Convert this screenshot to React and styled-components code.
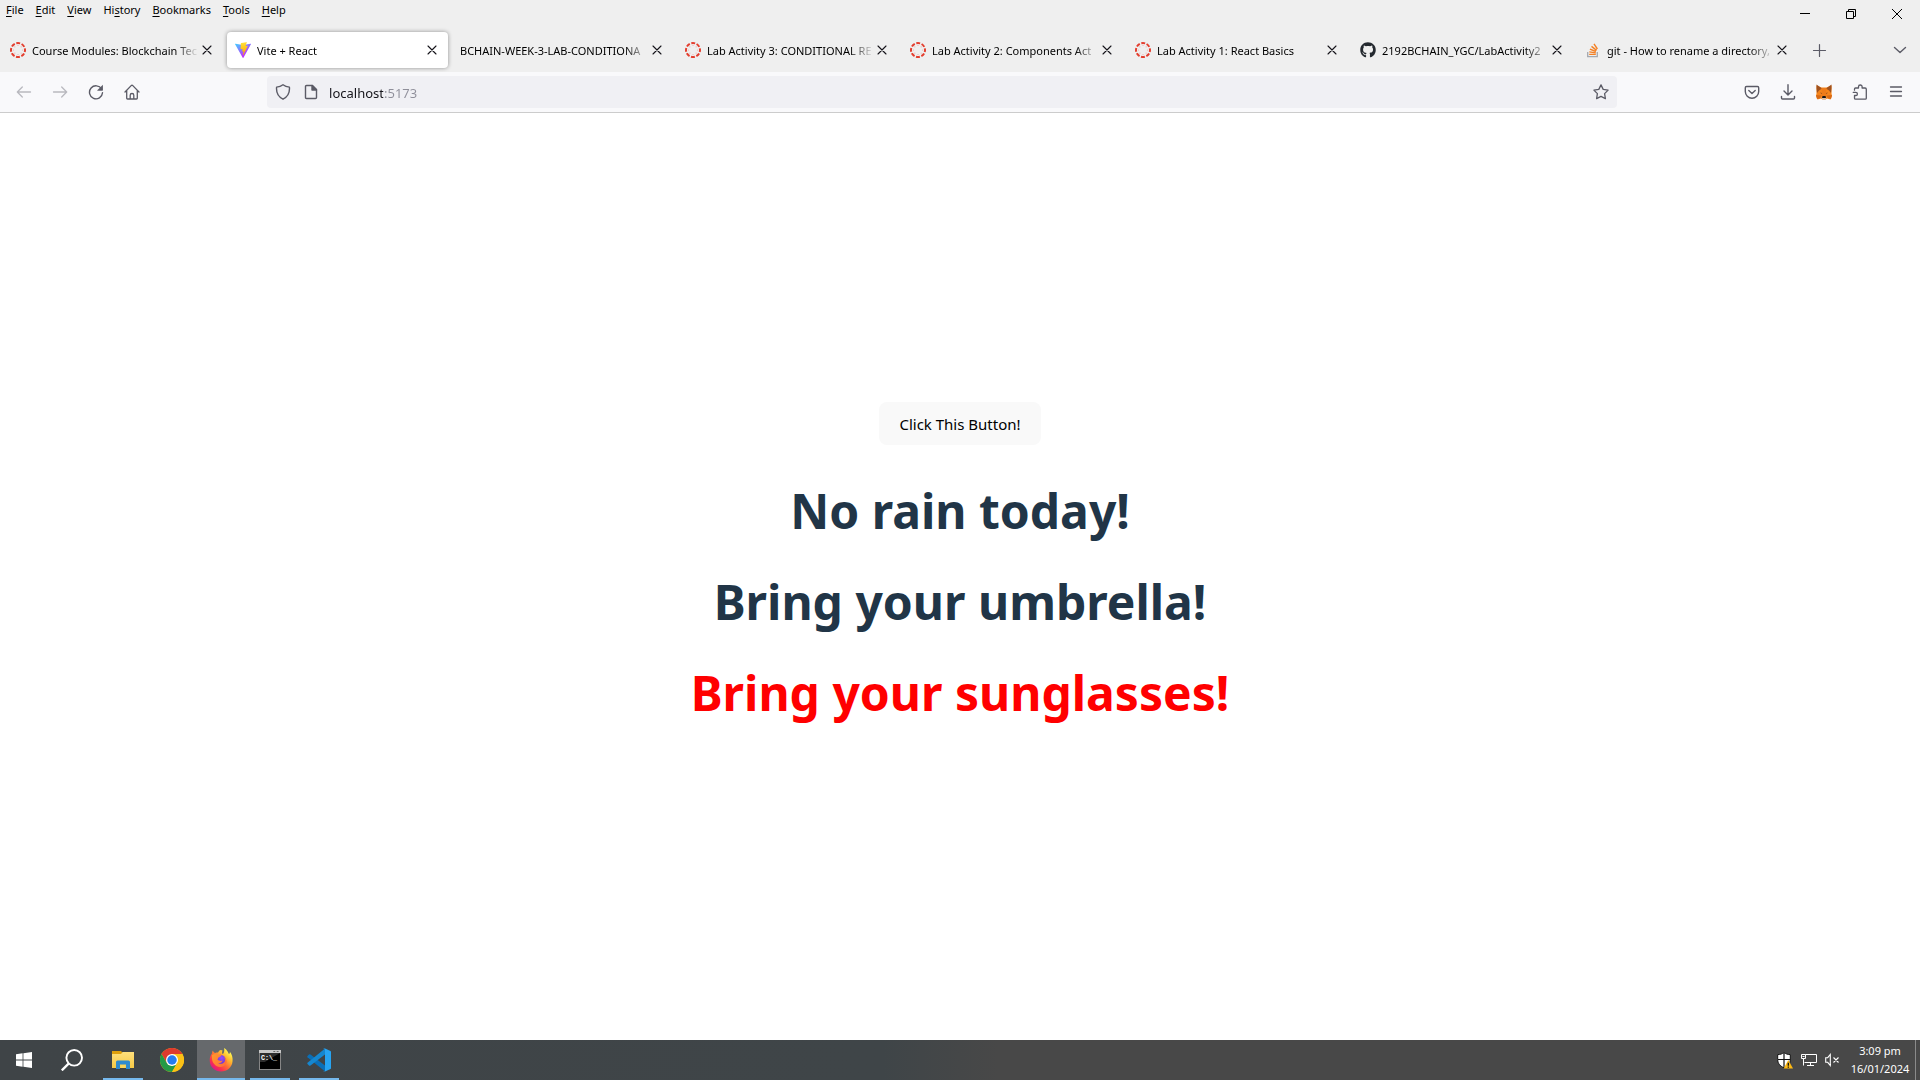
import React, { useState } from "react";
import styled, { createGlobalStyle, css } from "styled-components";
import { FaGithub } from "react-icons/fa";

const uiFont = `"Noto Sans", "Open Sans", sans-serif`;

const GlobalStyle = createGlobalStyle`
  *, *::before, *::after { box-sizing: border-box; }
  body { margin: 0; font-family: ${uiFont}; font-size: 11px; color: #000; background: #fff; }
  button, input { font: inherit; color: inherit; border: 0; background: none; padding: 0; margin: 0; }
  svg { display: block; flex: none; }
`;

const Desktop = styled.div`
  display: flex;
  flex-direction: column;
  min-height: 100vh;
`;

/* ---------- browser chrome ---------- */

const TitleArea = styled.header`
  background: #efefef;
`;

const TitleRow = styled.div`
  display: flex;
  align-items: flex-start;
  justify-content: space-between;
  height: 28px;
`;

const MenuBar = styled.nav`
  display: flex;
`;

const MenuButton = styled.button`
  height: 20px;
  padding: 0 6px;
  line-height: 20px;
  u { text-underline-offset: 2px; }
`;

const WindowControls = styled.div`
  display: flex;
`;

const WindowButton = styled.button`
  display: grid;
  place-items: center;
  width: 46px;
  height: 28px;
`;

const TabStrip = styled.div`
  display: flex;
  align-items: center;
  height: 44px;
`;

const TabSlot = styled.div`
  flex: 0 1 225px;
  min-width: 0;
  padding: 0 2px;
`;

const TabBox = styled.div`
  display: flex;
  align-items: center;
  gap: 6px;
  height: 36px;
  padding: 0 4px 0 8px;
  border-radius: 4px;
  ${(p) =>
    p.$active &&
    css`
      background: #fff;
      box-shadow: 0 0 4px rgba(0, 0, 0, 0.4);
    `}
`;

const TabTitle = styled.button`
  display: flex;
  align-items: center;
  gap: 6px;
  flex: 1;
  min-width: 0;
  height: 36px;
  text-align: left;
`;

const TabLabel = styled.span`
  flex: 1;
  min-width: 0;
  padding-top: 2px;
  overflow: hidden;
  white-space: nowrap;
  line-height: 20px;
  mask-image: linear-gradient(to left, transparent, #000 24px);
`;

const TabClose = styled.button`
  display: grid;
  place-items: center;
  width: 16px;
  height: 24px;
  margin: 0 4px 0 -6px;
`;

const StripButton = styled.button`
  display: grid;
  place-items: center;
  width: 36px;
  height: 36px;
  color: #5b5b66;
  margin-left: ${(p) => (p.$end ? "auto" : "1px")};
  margin-right: ${(p) => (p.$end ? "2px" : "0")};
`;

const NavBar = styled.div`
  display: flex;
  align-items: center;
  height: 41px;
  padding: 0 6px;
  background: #f9f9fb;
  border-bottom: 1px solid #ccc;
`;

const Spring = styled.div`
  flex: 2;
`;

const ToolButton = styled.button`
  display: grid;
  place-items: center;
  width: 36px;
  height: 32px;
  color: #5b5b66;
  &:disabled { color: #b9b9bf; }
`;

const UrlBar = styled.form`
  flex: 23;
  display: flex;
  align-items: center;
  height: 32px;
  padding: 0 2px;
  border-radius: 4px;
  background: #f0f0f4;
`;

const UrlButton = styled.button`
  display: grid;
  place-items: center;
  width: 28px;
  height: 28px;
  color: #5b5b66;
`;

const UrlInput = styled.input`
  flex: 1;
  min-width: 0;
  height: 28px;
  padding: 2px 0 0 4px;
  font-size: 13px;
  color: transparent;
  caret-color: #15141a;
  outline: none;
  background-image: linear-gradient(to right, #15141a 58px, #8f8f9a 58px);
  background-clip: text;
  -webkit-background-clip: text;
`;

/* ---------- web page ---------- */

const Page = styled.main`
  flex: 1;
  display: flex;
  flex-direction: column;
  align-items: center;
  justify-content: center;
  gap: 34px;
  padding-bottom: 31px;
  background: #fff;
`;

const PageButton = styled.button`
  margin-bottom: 3px;
  padding: 11px 20px 9px;
  border-radius: 8px;
  background: #f9f9f9;
  font-size: 15px;
  line-height: 23px;
`;

const Headline = styled.h1`
  margin: 0;
  font-size: 48px;
  font-weight: 700;
  line-height: 57px;
  color: ${(p) => (p.$alert ? "#ff0000" : "#213547")};
`;

/* ---------- taskbar ---------- */

const Taskbar = styled.footer`
  display: flex;
  justify-content: space-between;
  height: 40px;
  color: #fff;
  background: linear-gradient(to right, #3f4447 0%, #3f4548 46%, #484848 52%, #484848 100%);
`;

const TaskGroup = styled.div`
  display: flex;
  gap: ${(p) => p.$gap || 0}px;
  margin-left: ${(p) => (p.$gap ? 3 : 0)}px;
`;

const TaskButton = styled.button`
  display: grid;
  place-items: center;
  width: 48px;
  height: 40px;
  background: ${(p) => (p.$active ? "#66696c" : "none")};
  ${(p) =>
    p.$open &&
    css`
      background-image: linear-gradient(#76b9ed, #76b9ed);
      background-repeat: no-repeat;
      background-position: center bottom;
      background-size: ${p.$active ? 48 : 40}px 2px;
    `}
`;

const Tray = styled.div`
  display: flex;
  align-items: center;
`;

const TrayButton = styled.button`
  display: grid;
  place-items: center;
  width: 24px;
  height: 40px;
`;

const Clock = styled.button`
  width: 68px;
  margin-left: 1px;
  margin-right: 1px;
  line-height: 18px;
  text-align: center;
  white-space: nowrap;
  time { display: block; }
`;

const ShowDesktop = styled.button`
  width: 5px;
  height: 40px;
  border-left: 1px solid #8a8a8a;
`;

/* ---------- icons ---------- */

const Line = ({ size = 16, children, w = 1.3, ...rest }) => (
  <svg width={size} height={size} viewBox="0 0 16 16" fill="none" stroke="currentColor" strokeWidth={w} strokeLinecap="round" strokeLinejoin="round" aria-hidden="true" {...rest}>
    {children}
  </svg>
);

const CanvasIcon = () => (
  <svg width="16" height="16" viewBox="0 0 16 16" fill="none" aria-hidden="true">
    <circle cx="8" cy="8" r="7" stroke="#e33e2e" strokeWidth="2" strokeDasharray="3.9 1.598" strokeDashoffset="1.95" />
    {[0, 45, 90, 135, 180, 225, 270, 315].map((a) => (
      <circle key={a} cx="8" cy="3.6" r="0.5" fill="#e9a39b" transform={`rotate(${a} 8 8)`} />
    ))}
  </svg>
);

const ViteIcon = () => (
  <svg width="16" height="16" viewBox="0 0 256 257" aria-hidden="true">
    <defs>
      <linearGradient id="va" x1="0" x2="0.6" y1="0" y2="0.8"><stop offset="0" stopColor="#41d1ff" /><stop offset="1" stopColor="#bd34fe" /></linearGradient>
      <linearGradient id="vb" x1="0.43" x2="0.5" y1="0.02" y2="0.9"><stop offset="0" stopColor="#ffea83" /><stop offset="0.08" stopColor="#ffdd35" /><stop offset="1" stopColor="#ffa800" /></linearGradient>
    </defs>
    <path fill="url(#va)" d="M255.153 37.938L134.897 252.976c-2.483 4.44-8.862 4.466-11.382.048L.875 37.958c-2.746-4.814 1.371-10.646 6.827-9.67l120.385 21.517a6.537 6.537 0 0 0 2.322-.004l117.867-21.483c5.438-.991 9.574 4.796 6.877 9.62Z" />
    <path fill="url(#vb)" d="M185.432.063L96.44 17.501a3.268 3.268 0 0 0-2.634 3.014l-5.474 92.456a3.268 3.268 0 0 0 3.997 3.378l24.777-5.718c2.318-.535 4.413 1.507 3.936 3.838l-7.361 36.047c-.495 2.426 1.782 4.5 4.151 3.78l15.304-4.649c2.372-.72 4.652 1.36 4.15 3.788l-11.698 56.621c-.732 3.542 3.979 5.473 5.943 2.437l1.313-2.028l72.516-144.72c1.215-2.423-.88-5.186-3.54-4.672l-25.505 4.922c-2.396.462-4.435-1.77-3.759-4.114l16.646-57.705c.677-2.35-1.37-4.583-3.769-4.113Z" />
  </svg>
);

const StackIcon = () => (
  <svg width="16" height="16" viewBox="0 0 16 16" fill="none" aria-hidden="true">
    <path d="M2.7 10v4.6h9.6V10" stroke="#a5a8ae" strokeWidth="1.3" />
    <path d="M4.2 12.4h6.6M4.3 9.9l6.5 1M4.9 7.2l6 2.3M6.5 4.4l5.1 4M9 1.8l3.4 5.2" stroke="#f48024" strokeWidth="1.4" />
  </svg>
);

const CloseIcon = () => (
  <svg width="10" height="10" viewBox="0 0 10 10" stroke="#15141a" strokeWidth="1.1" strokeLinecap="round" aria-hidden="true">
    <path d="M1 1l8 8M9 1L1 9" />
  </svg>
);

const MetaMaskIcon = () => (
  <svg width="16" height="16" viewBox="0 0 32 32" aria-hidden="true">
    <path fill="#f6851b" d="M1 3l10 4h10l10-4v16l1 5-3 7-7-2-3 2h-6l-3-2-7 2-3-7 1-5z" />
    <path fill="#a0521f" d="M1 1l11 8-6 4-4 5-1-9zM31 1l-11 8 6 4 4 5 1-9z" />
    <path fill="#ee7c1a" d="M11 8h10l-1 10 3 6-7 1-7-1 3-6z" />
    <path fill="#d76a17" d="M0 22l10 1-1 5-7 2zM32 22l-10 1 1 5 7 2z" />
    <path fill="#8a4a25" d="M8 17l4 1-1 2zM24 17l-4 1 1 2z" />
    <path fill="#d7c1b3" d="M11 27h10l-2 4h-6z" />
    <path fill="#161616" d="M13 24h6l1 4h-8z" />
  </svg>
);

const WindowsIcon = () => (
  <svg width="16" height="16" viewBox="0 0 16 16" fill="#fff" aria-hidden="true">
    <path d="M0 2.2l6.6-.9v6.2H0zM7.4 1.2L16 0v7.5H7.4zM0 8.4h6.6v6.3L0 13.8zM7.4 8.4H16V16l-8.6-1.2z" />
  </svg>
);

const SearchIcon = () => (
  <svg width="22" height="22" viewBox="0 0 22 22" fill="none" stroke="#fff" aria-hidden="true">
    <circle cx="13.2" cy="8.8" r="7.8" strokeWidth="1.9" />
    <path d="M7.6 14.6L.8 21.4" strokeWidth="2.3" />
  </svg>
);

const ExplorerIcon = () => (
  <svg width="22" height="20" viewBox="0 0 22 20" aria-hidden="true">
    <defs><linearGradient id="fold" x1="0" x2="0" y1="0" y2="1"><stop offset="0" stopColor="#ffe07c" /><stop offset="1" stopColor="#f7c945" /></linearGradient></defs>
    <path fill="#dfa00c" d="M0 1h9l1.5 1.8L9 5H0z" />
    <path fill="url(#fold)" d="M0 4h9l1.6-2H22v16H0z" />
    <path fill="#2f8bcf" d="M4 12q0-1.5 1.500-1.500h11q1.500 0 1.500 1.500v7h-4v-4.500H8V19H4z" />
    <path fill="#fbd55c" d="M8.500 15h5v3h-5z" />
  </svg>
);

const ChromeIcon = () => (
  <svg width="24" height="24" viewBox="0 0 48 48" aria-hidden="true">
    <circle cx="24" cy="24" r="24" fill="#fbc116" />
    <path fill="#de3a2e" d="M3.200 12A24 24 0 0 1 44.800 12H24L13.600 30z" />
    <path fill="#249a46" d="M3.200 12A24 24 0 0 0 24 48L34.400 30 24 36 13.600 30z" />
    <path fill="#fbc116" d="M44.800 12H24l10.400 18L24 48A24 24 0 0 0 44.800 12z" />
    <circle cx="24" cy="24" r="12" fill="#fff" />
    <circle cx="24" cy="24" r="9.500" fill="#267cf0" />
  </svg>
);

const FirefoxIcon = () => (
  <svg width="24" height="24" viewBox="0 0 48 48" aria-hidden="true">
    <defs>
      <linearGradient id="ffa" x1="0.850" x2="0.150" y1="0.100" y2="0.900"><stop offset="0.050" stopColor="#fff44f" /><stop offset="0.300" stopColor="#ffb52e" /><stop offset="0.550" stopColor="#ff6b36" /><stop offset="0.800" stopColor="#f9304f" /><stop offset="1" stopColor="#d8178c" /></linearGradient>
      <radialGradient id="ffb" cx="0.600" cy="0.300" r="0.700"><stop offset="0" stopColor="#9a4dfd" /><stop offset="1" stopColor="#5b35c9" /></radialGradient>
      <linearGradient id="ffc" x1="0" x2="1" y1="0" y2="0.600"><stop offset="0" stopColor="#ff9a2b" /><stop offset="1" stopColor="#ff7139" /></linearGradient>
    </defs>
    <path fill="url(#ffa)" d="M30 0c7 4 8 9 10 12 2-1 2-3 1.500-5C46 13 48 19 47 27c-1 12-11 20-23 20S2 38 1.500 26C1 20 3 14 6 11c0-1 0-4 2-6 0 2 2 4 4 5 2-1 4-1 6-1 3-6 6-6 9-4-2 5 0 8 1 7 3-4 3-8 2-12z" />
    <circle cx="23" cy="24" r="10.500" fill="url(#ffb)" />
    <path fill="url(#ffc)" d="M6 14c5-3 9-2 12 0 2 0 4-2 7 0 0 2-4 4-6 5-2 2-1 4-2 5 4 1 6 3 10 1-1 5-6 6-9 5 3 3 10 2 13-2 2-4 1-7-1-10 5 3 7 9 4 14-4 6-13 8-19 4S5 27 6 14z" />
  </svg>
);

const TerminalIcon = () => (
  <svg width="22" height="20" viewBox="0 0 23 20" preserveAspectRatio="none" aria-hidden="true">
    <rect x="0.500" y="0.500" width="22" height="19" fill="#000" stroke="#8b8b8b" />
    <rect x="0" y="0" width="23" height="3" fill="#c8c8c8" />
    <path d="M15 1.500h2M18.500 1.500h2" stroke="#666" />
    <path fill="#2d2d2d" d="M1 3h21L6 12H1z" />
    <text x="2" y="10" fontSize="7" fontWeight="700" fontFamily="Liberation Mono, monospace" fill="#fff">C:\_</text>
  </svg>
);

const CodeIcon = () => (
  <svg width="24" height="24" viewBox="0 0 48 48" aria-hidden="true">
    <path fill="#0a6fb8" d="M1 16l3-3q1-1 3 0l29 22v12L1 18.500q-1-1 0-2.500z" />
    <path fill="#1587d0" d="M1 32l3 3q1 1 3 0L36 13V1L1 29.500q-1 1 0 2.500z" />
    <path fill="#27a4f2" d="M35 47.500q-2 .5-3-1 3 2 4-1V3q-1-3-4-1 1-2 3-1.500L47 6q1 .5 1 2v32q0 1.500-1 2z" />
  </svg>
);

const DefenderIcon = () => (
  <svg width="16" height="17" viewBox="0 0 16 17" aria-hidden="true">
    <path d="M7 .6c2 1.400 4 2 6.300 2v5c0 4-2.500 6.500-6.300 8.300C3.200 14 .7 11.600 .7 7.600v-5C3 2.600 5 2 7 .6z" fill="#fff" stroke="#111" />
    <path d="M7 1v15M1 7.500h12.500" stroke="#111" strokeWidth="1.200" />
    <path d="M11.300 8l4.700 8.500H6.600z" fill="#fdb913" />
    <path d="M11.300 10.800v3M11.300 14.600v1.200" stroke="#111" strokeWidth="1.300" />
  </svg>
);

const NetworkIcon = () => (
  <svg width="16" height="14" viewBox="0 0 16 14" fill="none" stroke="#fff" aria-hidden="true">
    <path d="M4.500 1.500h11v8h-12M.5 1.500h4v4h-4zM2.500 5.500v7M9.500 9.500v3M6 12.500h7M1.500 3.500h2" />
  </svg>
);

const MutedIcon = () => (
  <svg width="16" height="14" viewBox="0 0 16 14" fill="none" stroke="#fff" aria-hidden="true">
    <path d="M.7 4.700h2L5.300 1.500v11L2.700 9.300h-2zM8.500 4.500l5 5M13.500 4.500l-5 5" strokeWidth="1.100" />
  </svg>
);

/* ---------- data ---------- */

const menus = [["", "F", "ile"], ["", "E", "dit"], ["", "V", "iew"], ["Hi", "s", "tory"], ["", "B", "ookmarks"], ["", "T", "ools"], ["", "H", "elp"]];

const tabs = [
  { icon: <CanvasIcon />, title: "Course Modules: Blockchain Tec" },
  { icon: <ViteIcon />, title: "Vite + React" },
  { icon: null, title: "BCHAIN-WEEK-3-LAB-CONDITIONA" },
  { icon: <CanvasIcon />, title: "Lab Activity 3: CONDITIONAL RE" },
  { icon: <CanvasIcon />, title: "Lab Activity 2: Components Act" },
  { icon: <CanvasIcon />, title: "Lab Activity 1: React Basics" },
  { icon: <FaGithub size={16} color="#24292f" />, title: "2192BCHAIN_YGC/LabActivity2" },
  { icon: <StackIcon />, title: "git - How to rename a directory," },
];

const apps = [
  { name: "File Explorer", icon: <ExplorerIcon />, open: true },
  { name: "Google Chrome", icon: <ChromeIcon /> },
  { name: "Firefox", icon: <FirefoxIcon />, open: true, active: true },
  { name: "Command Prompt", icon: <TerminalIcon />, open: true },
  { name: "Visual Studio Code", icon: <CodeIcon />, open: true },
];

function BrowserHeader() {
  const [active, setActive] = useState(1);
  return (
    <TitleArea>
      <TitleRow>
        <MenuBar aria-label="Menu bar">
          {menus.map(([a, k, b]) => (
            <MenuButton key={k + b}>{a}<u>{k}</u>{b}</MenuButton>
          ))}
        </MenuBar>
        <WindowControls>
          <WindowButton aria-label="Minimize">
            <svg width="10" height="10" stroke="#000" aria-hidden="true"><path d="M0 4.500h10" /></svg>
          </WindowButton>
          <WindowButton aria-label="Restore">
            <svg width="10" height="10" fill="none" stroke="#000" aria-hidden="true"><path d="M.5 2.500h7v7h-7zM2.500 2.500v-2h7v7h-2" /></svg>
          </WindowButton>
          <WindowButton aria-label="Close">
            <svg width="10" height="10" stroke="#000" aria-hidden="true"><path d="M0 0l10 10M10 0L0 10" /></svg>
          </WindowButton>
        </WindowControls>
      </TitleRow>
      <TabStrip>
        {tabs.map((t, i) => (
          <TabSlot key={t.title}>
            <TabBox $active={i === active}>
              <TabTitle onClick={() => setActive(i)}>
                {t.icon}
                <TabLabel>{t.title}</TabLabel>
              </TabTitle>
              <TabClose aria-label={`Close ${t.title}`}><CloseIcon /></TabClose>
            </TabBox>
          </TabSlot>
        ))}
        <StripButton aria-label="New tab"><Line w={1.2}><path d="M2.500 8.500h12M8.500 2.500v12" /></Line></StripButton>
        <StripButton $end aria-label="List all tabs"><Line w={1.4}><path d="M2.500 5.500L8 10.500l5.500-5" /></Line></StripButton>
      </TabStrip>
    </TitleArea>
  );
}

function Navigation() {
  return (
    <NavBar>
      <ToolButton disabled aria-label="Back"><Line><path d="M14.500 8h-13M6.300 3L1.300 8l5 5" /></Line></ToolButton>
      <ToolButton disabled aria-label="Forward"><Line><path d="M1.500 8h13M9.700 3l5 5-5 5" /></Line></ToolButton>
      <ToolButton aria-label="Reload">
        <Line w={1.4}><path d="M13.600 5A6.500 6.500 0 1 0 14.500 8.800" /><path d="M14.500 1.800v4.500H10z" fill="currentColor" strokeWidth="0.800" /></Line>
      </ToolButton>
      <ToolButton aria-label="Home">
        <Line><path d="M1 8l6.200-6.400q.8-.7 1.600 0L15 8M2.700 6.800v7.400q0 .8.800.8h9q.8 0 .8-.8V6.800M6.200 15v-3.800q0-1.700 1.800-1.700t1.800 1.700V15" /></Line>
      </ToolButton>
      <Spring />
      <UrlBar onSubmit={(e) => e.preventDefault()}>
        <UrlButton type="button" aria-label="Tracking protection">
          <Line w={1.400}><path d="M8 .8c2 1.500 4 2.100 6.400 2.300.5 5-1.400 9.600-6.400 12.100C3 12.700 1.100 8.100 1.600 3.100 4 2.900 6 2.300 8 .8z" /></Line>
        </UrlButton>
        <UrlButton type="button" aria-label="Site information">
          <Line w={1.400}><path d="M3.500 1.500h6l4 4V13.500q0 1-1 1h-9q-1 0-1-1v-11q0-1 1-1z" /><path d="M9 1.500v4.500h4.500z" fill="currentColor" /></Line>
        </UrlButton>
        <UrlInput aria-label="Address" defaultValue="localhost:5173" spellCheck={false} />
        <UrlButton type="button" aria-label="Bookmark this page">
          <Line><path d="M8 .9l2.200 4.500 4.900.7-3.500 3.500.8 5L8 12.300l-4.400 2.300.8-5L.9 6.100l4.900-.7z" /></Line>
        </UrlButton>
      </UrlBar>
      <Spring />
      <ToolButton aria-label="Save to Pocket">
        <Line w={1.400}><path d="M2.500 2.500h11q1.200 0 1.200 1.200V7.500a6.700 6.700 0 0 1-13.400 0V3.700q0-1.200 1.200-1.200z" /><path d="M4.800 6.500L8 9.500l3.200-3" /></Line>
      </ToolButton>
      <ToolButton aria-label="Downloads">
        <Line w={1.400}><path d="M8 .8v10M4 7l4 4 4-4M1.500 12.500V14q0 1 1 1h11q1 0 1-1v-1.500" /></Line>
      </ToolButton>
      <ToolButton aria-label="MetaMask"><MetaMaskIcon /></ToolButton>
      <ToolButton aria-label="Extensions">
        <Line><path d="M2.500 6.200V5q0-1 1-1h3V2.800a1.700 1.700 0 0 1 3.600 0V4h3q1.200 0 1.200 1.200v9q0 1-1 1H3.500q-1 0-1-1V11.500h1.300a1.500 1.500 0 0 0 0-3.200H1.200" /></Line>
      </ToolButton>
      <ToolButton aria-label="Application menu"><Line><path d="M2.500 3h11M2.500 7.500h11M2.500 12h11" /></Line></ToolButton>
    </NavBar>
  );
}

export default function App() {
  return (
    <Desktop>
      <GlobalStyle />
      <BrowserHeader />
      <Navigation />
      <Page>
        <PageButton>Click This Button!</PageButton>
        <Headline>No rain today!</Headline>
        <Headline>Bring your umbrella!</Headline>
        <Headline $alert>Bring your sunglasses!</Headline>
      </Page>
      <Taskbar>
        <TaskGroup>
          <TaskButton aria-label="Start"><WindowsIcon /></TaskButton>
          <TaskButton aria-label="Search"><SearchIcon /></TaskButton>
          <TaskGroup $gap={1}>
            {apps.map((a) => (
              <TaskButton key={a.name} aria-label={a.name} $open={a.open} $active={a.active}>{a.icon}</TaskButton>
            ))}
          </TaskGroup>
        </TaskGroup>
        <Tray>
          <TrayButton aria-label="Windows Security"><DefenderIcon /></TrayButton>
          <TrayButton aria-label="Network"><NetworkIcon /></TrayButton>
          <TrayButton aria-label="Volume muted"><MutedIcon /></TrayButton>
          <Clock><time>3:09 pm</time><time>16/01/2024</time></Clock>
          <ShowDesktop aria-label="Show desktop" />
        </Tray>
      </Taskbar>
    </Desktop>
  );
}
